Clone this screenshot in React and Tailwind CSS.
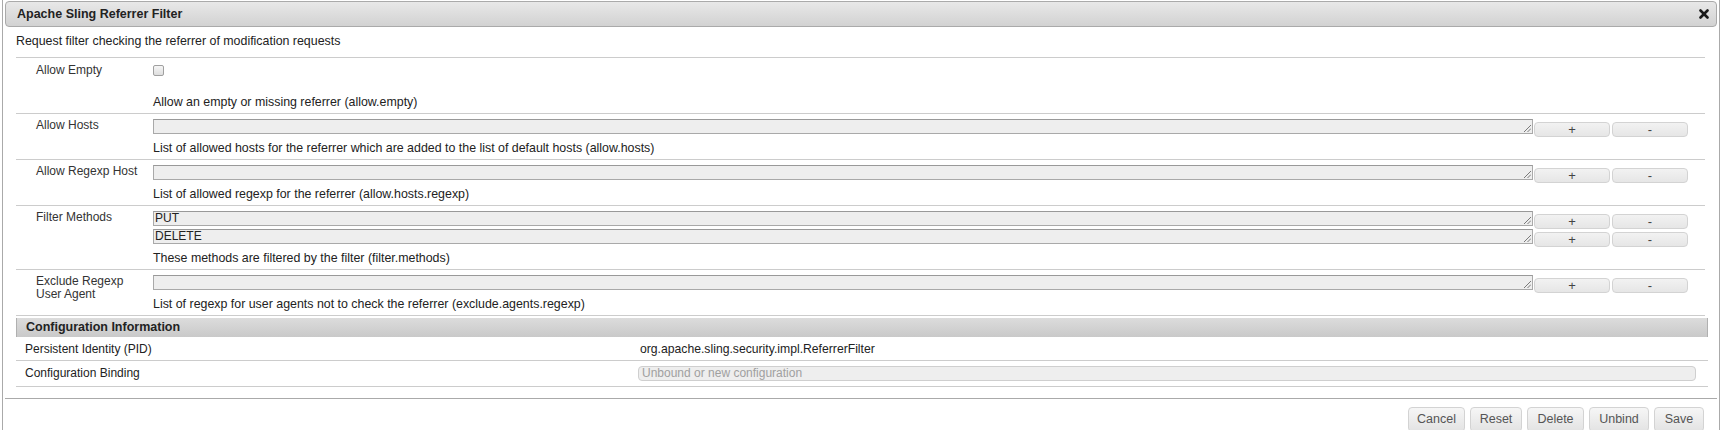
import React from "react";

// Small diagonal grip drawn in the bottom-right corner of a resizable text box
function Grip() {
  return (
    <svg
      className="absolute right-[1px] bottom-[1px]"
      width="8"
      height="8"
      viewBox="0 0 8 8"
    >
      <line x1="1" y1="8" x2="8" y2="1" stroke="#7a7a7a" strokeWidth="1" />
      <line x1="4.5" y1="8" x2="8" y2="4.5" stroke="#7a7a7a" strokeWidth="1" />
    </svg>
  );
}

function SmallButton({ children, className }) {
  return (
    <div
      className={
        "mt-[3px] w-[76px] h-[15px] rounded-[4px] border border-[#d3d3d3] bg-gradient-to-b from-[#f2f2f2] to-[#e6e6e6] flex items-center justify-center text-[13px] leading-[13px] text-[#444] " +
        className
      }
    >
      {children}
    </div>
  );
}

// One line of a multi-value property: text box plus the add/remove buttons
function ValueLine({ value }) {
  return (
    <div className="flex h-[18px]">
      <div className="relative w-[1380px] h-[15px] border border-[#a9a9a9] border-t-[#999] bg-[#eeeeee] pl-[1px] text-[12px] leading-[13px] text-[#222]">
        {value}
        <Grip />
      </div>
      <SmallButton className="ml-[1px]">+</SmallButton>
      <SmallButton className="ml-[2px]">-</SmallButton>
    </div>
  );
}

function PropRow({ label, children, labelTop = "pt-[5px]" }) {
  return (
    <div className="flex border-b border-[#cccccc]">
      <div
        className={
          "w-[137px] shrink-0 pl-[20px] pr-[10px] text-[12px] leading-[13px] text-[#333] " +
          labelTop
        }
      >
        {label}
      </div>
      <div className="flex-1">{children}</div>
    </div>
  );
}

function Description({ children, className = "" }) {
  return (
    <div className={"text-[12.4px] leading-[16px] text-[#222] " + className}>
      {children}
    </div>
  );
}

function MultiRow({ label, values, description }) {
  return (
    <PropRow label={label}>
      <div className="pt-[5px] pb-[3px]">
        {values.map((v, i) => (
          <ValueLine key={i} value={v} />
        ))}
        <Description className="mt-[3px]">{description}</Description>
      </div>
    </PropRow>
  );
}

function FooterButton({ children, width }) {
  return (
    <div
      className={
        "h-[25px] rounded-[4px] border border-[#d3d3d3] bg-gradient-to-b from-[#f6f6f6] to-[#e3e3e3] flex items-center justify-center text-[12.5px] text-[#555] " +
        width
      }
    >
      {children}
    </div>
  );
}

export default function App() {
  return (
    <div className="w-[1723px] h-[430px] overflow-hidden bg-white font-['Liberation_Sans',Arial,sans-serif]">
      <div className="ml-[2px] w-[1718px] h-[430px] border-x border-[#aaaaaa] px-[2px] pt-[1px]">
        {/* Title bar */}
        <div className="h-[26px] rounded-[4px] border border-[#aaaaaa] bg-gradient-to-b from-[#e8e8e8] to-[#d2d2d2] flex items-center justify-between pl-[11px] pr-[7px]">
          <span className="text-[12.5px] font-bold text-[#222]">
            Apache Sling Referrer Filter
          </span>
          <svg width="10" height="10" viewBox="0 0 10 10">
            <line x1="1.5" y1="1.5" x2="8.5" y2="8.5" stroke="#1a1a1a" strokeWidth="2.6" strokeLinecap="round" />
            <line x1="8.5" y1="1.5" x2="1.5" y2="8.5" stroke="#1a1a1a" strokeWidth="2.6" strokeLinecap="round" />
          </svg>
        </div>

        {/* Properties form */}
        <div className="ml-[11px] w-[1689px]">
          <div className="border-b border-[#cccccc] pt-[6px] pb-[8px]">
            <Description>
              Request filter checking the referrer of modification requests
            </Description>
          </div>

          <PropRow label="Allow Empty" labelTop="pt-[6px]">
            <div className="pt-[7px] pb-[3px]">
              <div className="w-[11px] h-[11px] rounded-[2px] border border-[#a0a0a0] bg-gradient-to-b from-[#f6f6f6] to-[#dedede]" />
              <Description className="mt-[18px]">
                Allow an empty or missing referrer (allow.empty)
              </Description>
            </div>
          </PropRow>

          <MultiRow
            label="Allow Hosts"
            values={[""]}
            description="List of allowed hosts for the referrer which are added to the list of default hosts (allow.hosts)"
          />
          <MultiRow
            label="Allow Regexp Host"
            values={[""]}
            description="List of allowed regexp for the referrer (allow.hosts.regexp)"
          />
          <MultiRow
            label="Filter Methods"
            values={["PUT", "DELETE"]}
            description="These methods are filtered by the filter (filter.methods)"
          />
          <MultiRow
            label="Exclude Regexp User Agent"
            values={[""]}
            description="List of regexp for user agents not to check the referrer (exclude.agents.regexp)"
          />
        </div>

        {/* Configuration information */}
        <div className="ml-[11px] w-[1692px] mt-[2px]">
          <div className="h-[19px] border-x border-[#b0b0b0] bg-gradient-to-b from-[#dcdcdc] to-[#c9c9c9] pl-[9px] flex items-center text-[12.5px] font-bold text-[#222]">
            Configuration Information
          </div>
          <div className="flex h-[24px] border-b border-[#cccccc] text-[12px] leading-[16px] text-[#222]">
            <div className="w-[624px] pl-[9px] pt-[4px]">Persistent Identity (PID)</div>
            <div className="pt-[4px] text-[12.2px]">org.apache.sling.security.impl.ReferrerFilter</div>
          </div>
          <div className="flex h-[26px] border-b border-[#cccccc] text-[12px] leading-[16px] text-[#222]">
            <div className="w-[622px] pl-[9px] pt-[4px]">Configuration Binding</div>
            <div className="pt-[5px]">
              <div className="w-[1058px] h-[15px] rounded-[4px] border border-[#cfcfcf] bg-[#eeeeee] pl-[3px] text-[12px] leading-[13px] text-[#a0a0a0]">
                Unbound or new configuration
              </div>
            </div>
          </div>
        </div>

        {/* Button pane */}
        <div className="mt-[11px] border-t border-[#aaaaaa] pt-[8px] pr-[13px] flex justify-end gap-[5px]">
          <FooterButton width="w-[57px]">Cancel</FooterButton>
          <FooterButton width="w-[52px]">Reset</FooterButton>
          <FooterButton width="w-[57px]">Delete</FooterButton>
          <FooterButton width="w-[60px]">Unbind</FooterButton>
          <FooterButton width="w-[50px]">Save</FooterButton>
        </div>
      </div>
    </div>
  );
}
